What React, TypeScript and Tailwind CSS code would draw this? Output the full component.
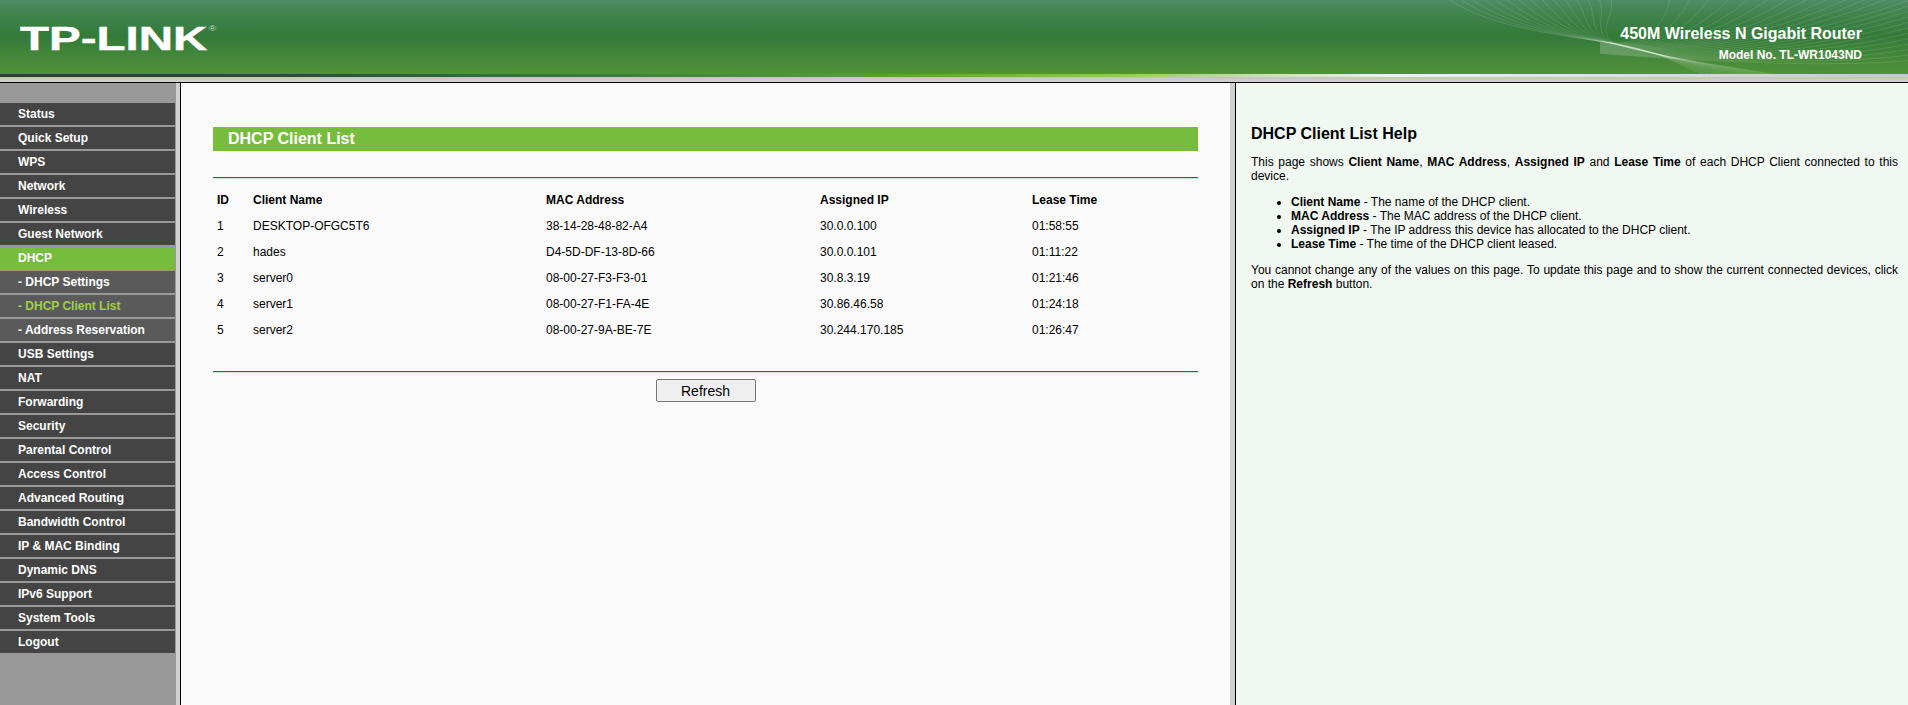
const menu = [
  { label: "Status" },
  { label: "Quick Setup" },
  { label: "WPS" },
  { label: "Network" },
  { label: "Wireless" },
  { label: "Guest Network" },
  { label: "DHCP", active: true },
  { label: "- DHCP Settings", sub: true },
  { label: "- DHCP Client List", sub: true, current: true },
  { label: "- Address Reservation", sub: true },
  { label: "USB Settings" },
  { label: "NAT" },
  { label: "Forwarding" },
  { label: "Security" },
  { label: "Parental Control" },
  { label: "Access Control" },
  { label: "Advanced Routing" },
  { label: "Bandwidth Control" },
  { label: "IP & MAC Binding" },
  { label: "Dynamic DNS" },
  { label: "IPv6 Support" },
  { label: "System Tools" },
  { label: "Logout" },
]

const clients = [
  ["1", "DESKTOP-OFGC5T6", "38-14-28-48-82-A4", "30.0.0.100", "01:58:55"],
  ["2", "hades", "D4-5D-DF-13-8D-66", "30.0.0.101", "01:11:22"],
  ["3", "server0", "08-00-27-F3-F3-01", "30.8.3.19", "01:21:46"],
  ["4", "server1", "08-00-27-F1-FA-4E", "30.86.46.58", "01:24:18"],
  ["5", "server2", "08-00-27-9A-BE-7E", "30.244.170.185", "01:26:47"],
]

function Swoosh() {
  const lower = Array.from({ length: 15 }, (_, i) => i)
  const upper = Array.from({ length: 24 }, (_, i) => i)
  return (
    <svg className="absolute right-0 top-0" width="478" height="74" viewBox="0 0 478 74" fill="none">
      {lower.map((i) => (
        <path
          key={i}
          d={`M${20 + i * 11.5} 0 C${60 + i * 9} ${26 - i * 0.8} ${120 + i * 3} ${34 + i * 0.1} ${175 + i} ${42 + i * 0.2} S${250 + i * 3} 66 ${273 + i * 5} 74`}
          stroke="#ffffff"
          strokeOpacity="0.17"
          strokeWidth="0.7"
        />
      ))}
      {upper.map((i) => (
        <path
          key={i}
          d={`M170 ${42 + i * 0.5} Q${230 + i * 6.5} ${50 + i * 0.85} ${i < 12 ? 240 + i * 20 : 480} ${i < 12 ? -2 : (i - 12) * 5.5}`}
          stroke="#ffffff"
          strokeOpacity="0.16"
          strokeWidth="0.7"
        />
      ))}
    </svg>
  )
}

export default function App() {
  return (
    <div className="h-[705px] w-[1908px] overflow-hidden bg-white font-['Liberation_Sans',Arial,sans-serif] text-xs text-black">
      <header className="relative h-[74px] bg-[linear-gradient(180deg,#4f8d64_0%,#40844f_18%,#337a3a_48%,#46893a_80%,#4f9238_100%)]">
        <Swoosh />
        <div className="absolute left-[20px] top-[19px] flex origin-left scale-x-[1.44] text-[33px] leading-[40px] font-bold text-white [-webkit-text-stroke:0.4px_white]">
          TP-LINK
          <span className="ml-[1px] mt-[6px] text-[7px] leading-[8px] font-normal text-white/70 [-webkit-text-stroke:0]">®</span>
        </div>
        <div className="absolute right-[46px] top-[24px] text-right font-bold text-white">
          <div className="text-[16px] leading-[19px]">450M Wireless N Gigabit Router</div>
          <div className="mt-[5px] text-xs leading-[14px]">Model No. TL-WR1043ND</div>
        </div>
      </header>
      <div className="h-[3px] bg-[linear-gradient(90deg,#2f3f33_0%,#2a4f38_16%,#2d6a3e_24%,#5aa03c_47%,#8cc858_58%,#c8e0b0_66%,#f0f0f0_73%,#c8c8c8_100%)]" />
      <div className="h-[5px] bg-[linear-gradient(180deg,#c4c4c4,#d2d2d2)]" />
      <div className="flex h-[623px] border-t border-black">
        <nav className="w-[176px] bg-[#999999] pt-[20px]">
          {menu.map((m) => (
            <div
              key={m.label}
              className={`mb-[2px] flex h-[22px] w-[175px] items-center pl-[18px] font-bold ${
                m.current
                  ? "bg-[#5a5a5a] text-[#9ed04c]"
                  : m.active
                    ? "bg-[#76bc3d] text-white"
                    : m.sub
                      ? "bg-[#5a5a5a] text-white"
                      : "bg-[#444444] text-white"
              }`}
            >
              {m.label}
            </div>
          ))}
        </nav>
        <div className="w-[4px] bg-[#d0d0d0]" />
        <main className="w-[1050px] border-l border-black bg-[#fafafa] pl-[32px] pr-[32px] pt-[44px]">
          <h1 className="h-[24px] bg-[#76bc3d] pl-[15px] text-base leading-[24px] font-bold text-white">DHCP Client List</h1>
          <div className="mt-[26px] h-[2px] border-t border-[#2f6b45] bg-[#cfe0d3]" />
          <table className="mt-[7px] w-full table-fixed border-collapse text-left">
            <thead>
              <tr className="h-[27px]">
                <th className="w-[40px] pl-[4px]">ID</th>
                <th className="w-[293px]">Client Name</th>
                <th className="w-[274px]">MAC Address</th>
                <th className="w-[212px]">Assigned IP</th>
                <th>Lease Time</th>
              </tr>
            </thead>
            <tbody>
              {clients.map((row) => (
                <tr key={row[0]} className="h-[26px]">
                  <td className="pl-[4px]">{row[0]}</td>
                  <td>{row[1]}</td>
                  <td>{row[2]}</td>
                  <td>{row[3]}</td>
                  <td>{row[4]}</td>
                </tr>
              ))}
            </tbody>
          </table>
          <div className="mt-[28px] h-[2px] border-t border-[#2f6b45] bg-[#cfe0d3]" />
          <div className="mt-[6px] flex justify-center">
            <button className="h-[23px] w-[100px] rounded-[2px] border border-[#767676] bg-[#efefef] text-sm leading-none">
              Refresh
            </button>
          </div>
        </main>
        <div className="w-[5px] bg-[#d0d0d0]" />
        <aside className="flex-1 border-l border-black bg-[#f1f7f1] pl-[15px] pr-[10px] pt-[42px] leading-[14px]">
          <h2 className="text-base leading-[18px] font-bold">DHCP Client List Help</h2>
          <p className="mt-[12px] text-justify">
            This page shows <b>Client Name</b>, <b>MAC Address</b>, <b>Assigned IP</b> and <b>Lease Time</b> of each DHCP Client connected to this device.
          </p>
          <ul className="mt-[12px] list-disc pl-[40px]">
            <li><b>Client Name</b> - The name of the DHCP client.</li>
            <li><b>MAC Address</b> - The MAC address of the DHCP client.</li>
            <li><b>Assigned IP</b> - The IP address this device has allocated to the DHCP client.</li>
            <li><b>Lease Time</b> - The time of the DHCP client leased.</li>
          </ul>
          <p className="mt-[12px] text-justify">
            You cannot change any of the values on this page. To update this page and to show the current connected devices, click on the <b>Refresh</b> button.
          </p>
        </aside>
      </div>
    </div>
  )
}
